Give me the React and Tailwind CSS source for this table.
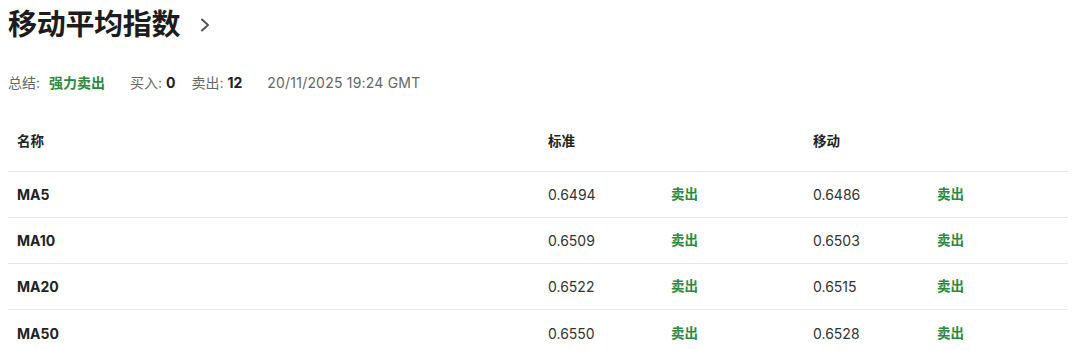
import React from "react";

const rows = [
  { name: "MA5", std: "0.6494", mov: "0.6486" },
  { name: "MA10", std: "0.6509", mov: "0.6503" },
  { name: "MA20", std: "0.6522", mov: "0.6515" },
  { name: "MA50", std: "0.6550", mov: "0.6528" },
];

const grid = "grid grid-cols-[531px_123px_142px_124px_1fr]";

export default function App() {
  return (
    <div
      className="w-[1080px] h-[350px] bg-white overflow-hidden pl-2 text-[#222]"
      style={{ fontFamily: '"Inter", "Noto Sans CJK SC", sans-serif' }}
    >
      <div className="h-[48px] flex items-center gap-[18px]">
        <h1 className="text-[29px] font-bold tracking-[-0.3px] leading-none text-[#1c1c1c]">移动平均指数</h1>
        <svg width="14" height="16" viewBox="0 0 14 16" className="mt-[2px]">
          <path d="M4 2.5 L10 8 L4 13.5" fill="none" stroke="#555" strokeWidth="2" strokeLinecap="round" strokeLinejoin="round" />
        </svg>
      </div>
      <div className="mt-[24px] h-[20px] flex items-center text-[14px] text-[#666]">
        <span>总结:</span>
        <span className="ml-[9px] font-bold text-[#2b8a3e]">强力卖出</span>
        <span className="ml-[25px]">买入: <b className="text-[#222]">0</b></span>
        <span className="ml-[16px]">卖出: <b className="text-[#222]">12</b></span>
        <span className="ml-[25px] tracking-[0.2px]">20/11/2025 19:24 GMT</span>
      </div>
      <div className="mt-[20px] w-[1060px] text-[14px]">
        <div className={`${grid} h-[60px] items-center border-b border-[#e8e8e8] font-semibold text-[13.5px]`}>
          <div className="pl-[9px]">名称</div>
          <div className="pl-[9px]">标准</div>
          <div></div>
          <div className="pl-[9px]">移动</div>
          <div></div>
        </div>
        {rows.map((r, i) => (
          <div
            key={r.name}
            className={`${grid} h-[46px] items-center ${i < rows.length - 1 ? "border-b border-[#e8e8e8]" : ""}`}
          >
            <div className="pl-[9px] font-bold">{r.name}</div>
            <div className="pl-[9px] text-[#333]">{r.std}</div>
            <div className="pl-[9px] font-semibold text-[#2b8a3e] text-[13.5px]">卖出</div>
            <div className="pl-[9px] text-[#333]">{r.mov}</div>
            <div className="pl-[9px] font-semibold text-[#2b8a3e] text-[13.5px]">卖出</div>
          </div>
        ))}
      </div>
    </div>
  );
}
